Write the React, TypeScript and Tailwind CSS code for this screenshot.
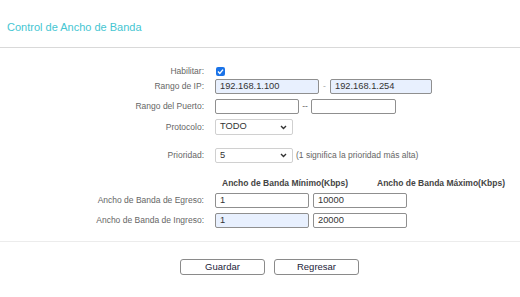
import React from "react";

const font = { fontFamily: '"Liberation Sans", Arial, sans-serif' };

const Label: React.FC<{ text: string }> = ({ text }) => (
  <div className="w-[204px] shrink-0 text-right text-[8.5px] leading-none text-[#666]">{text}</div>
);

const Field: React.FC<{ value?: string; width: string; blue?: boolean }> = ({ value = "", width, blue }) => (
  <div
    className={`${width} h-full flex items-center pl-[4px] border border-[#8f8f8f] rounded-[2px] text-[9.3px] text-[#333] ${
      blue ? "bg-[#e8f0fe]" : "bg-white"
    }`}
  >
    {value}
  </div>
);

const Select: React.FC<{ value: string }> = ({ value }) => (
  <div className="w-[78px] h-full flex items-center justify-between pl-[4px] pr-[5px] border border-[#d0d0d0] rounded-[2px] bg-white text-[9.3px] text-[#333]">
    <span>{value}</span>
    <svg width="7" height="5" viewBox="0 0 7 5">
      <polyline points="1,1 3.5,3.5 6,1" fill="none" stroke="#333" strokeWidth="1.4" />
    </svg>
  </div>
);

export default function App() {
  return (
    <div className="w-[520px] h-[297px] bg-white overflow-hidden" style={font}>
      <div className="h-[48px] pt-[20px] pl-[7px] border-b border-[#d9d9d9]">
        <div className="text-[11px] leading-[15px] text-[#45c6d2]">Control de Ancho de Banda</div>
      </div>

      <div className="pt-[16px] flex flex-col">
        <div className="h-[15px] flex items-center gap-[12px]">
          <Label text="Habilitar:" />
          <div className="w-[9px] h-[9px] rounded-[2px] bg-[#1a73e8] flex items-center justify-center">
            <svg width="7" height="7" viewBox="0 0 7 7">
              <polyline points="1,3.6 2.8,5.4 6,1.6" fill="none" stroke="white" strokeWidth="1.4" />
            </svg>
          </div>
        </div>

        <div className="h-[15px] flex items-center gap-[11px]">
          <Label text="Rango de IP:" />
          <div className="h-full flex items-center">
            <Field value="192.168.1.100" width="w-[104px]" blue />
            <span className="w-[11px] text-center text-[8.5px] text-[#aaa]">-</span>
            <Field value="192.168.1.254" width="w-[102px]" blue />
          </div>
        </div>

        <div className="mt-[5px] h-[15px] flex items-center gap-[11px]">
          <Label text="Rango del Puerto:" />
          <div className="h-full flex items-center">
            <Field width="w-[84px]" />
            <span className="w-[12px] text-center text-[8.5px] text-[#666]">--</span>
            <Field width="w-[85px]" />
          </div>
        </div>

        <div className="mt-[5px] h-[16px] flex items-center gap-[11px]">
          <Label text="Protocolo:" />
          <Select value="TODO" />
        </div>

        <div className="mt-[13px] h-[15px] flex items-center gap-[11px]">
          <Label text="Prioridad:" />
          <Select value="5" />
          <span className="-ml-[8px] text-[8.5px] text-[#666]">(1 significa la prioridad más alta)</span>
        </div>

        <div className="mt-[15px] h-[10px] flex items-center gap-[11px]">
          <div className="w-[204px] shrink-0" />
          <div className="flex items-center text-[8.5px] font-bold text-[#444]">
            <span className="w-[162px] pl-[7px]">Ancho de Banda Mínimo(Kbps)</span>
            <span>Ancho de Banda Máximo(Kbps)</span>
          </div>
        </div>

        <div className="mt-[5px] h-[15px] flex items-center gap-[11px]">
          <Label text="Ancho de Banda de Egreso:" />
          <div className="h-full flex items-center gap-[4px]">
            <Field value="1" width="w-[94px]" />
            <Field value="10000" width="w-[94px]" />
          </div>
        </div>

        <div className="mt-[5px] h-[15px] flex items-center gap-[11px]">
          <Label text="Ancho de Banda de Ingreso:" />
          <div className="h-full flex items-center gap-[4px]">
            <Field value="1" width="w-[94px]" blue />
            <Field value="20000" width="w-[94px]" />
          </div>
        </div>

        <div className="mt-[13px] border-t border-[#ececec]" />

        <div className="mt-[17px] h-[16px] pl-[180px] flex gap-[9px]">
          <div className="w-[85px] h-full flex items-center justify-center border border-[#8a8a8a] rounded-[3px] bg-white text-[9.5px] text-[#1c1c3a]">
            Guardar
          </div>
          <div className="w-[85px] h-full flex items-center justify-center border border-[#8a8a8a] rounded-[3px] bg-white text-[9.5px] text-[#1c1c3a]">
            Regresar
          </div>
        </div>
      </div>
    </div>
  );
}
